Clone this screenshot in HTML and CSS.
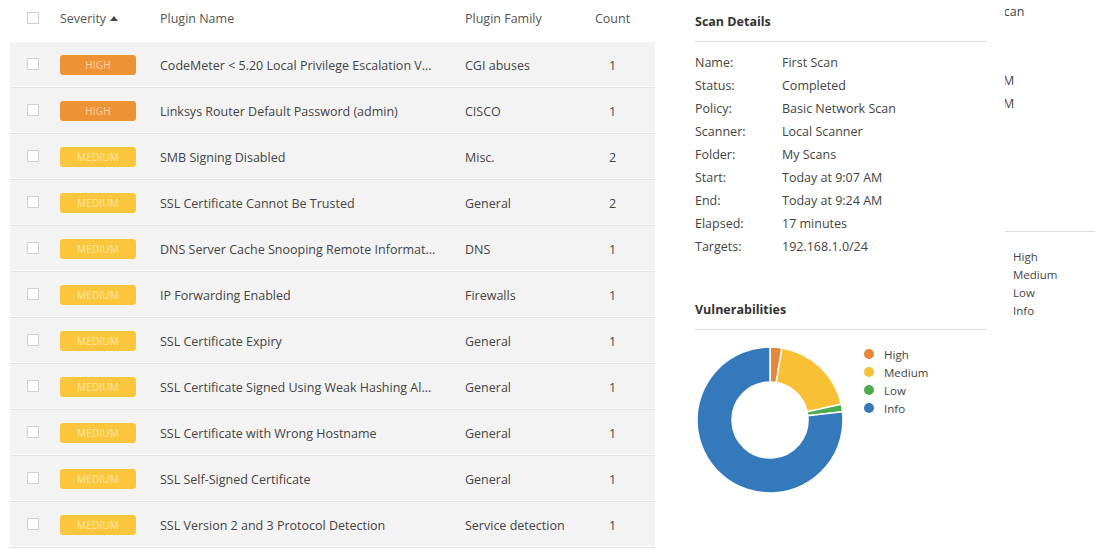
FILE: index.html
```html
<!DOCTYPE html>
<html>
<head>
<meta charset="utf-8">
<link rel="stylesheet" href="styles.css">
</head>
<body>
<div class="page">
  <div class="table">
    <div class="row head">
      <div class="c-check"><span class="box"></span></div>
      <div class="c-sev">Severity <span class="sort"></span></div>
      <div class="c-name">Plugin Name</div>
      <div class="c-fam">Plugin Family</div>
      <div class="c-count">Count</div>
    </div>
    <div class="row"><div class="c-check"><span class="box"></span></div><div class="c-sev"><span class="badge high">HIGH</span></div><div class="c-name">CodeMeter &lt; 5.20 Local Privilege Escalation V...</div><div class="c-fam">CGI abuses</div><div class="c-count">1</div></div>
    <div class="row"><div class="c-check"><span class="box"></span></div><div class="c-sev"><span class="badge high">HIGH</span></div><div class="c-name">Linksys Router Default Password (admin)</div><div class="c-fam">CISCO</div><div class="c-count">1</div></div>
    <div class="row"><div class="c-check"><span class="box"></span></div><div class="c-sev"><span class="badge med">MEDIUM</span></div><div class="c-name">SMB Signing Disabled</div><div class="c-fam">Misc.</div><div class="c-count">2</div></div>
    <div class="row"><div class="c-check"><span class="box"></span></div><div class="c-sev"><span class="badge med">MEDIUM</span></div><div class="c-name">SSL Certificate Cannot Be Trusted</div><div class="c-fam">General</div><div class="c-count">2</div></div>
    <div class="row"><div class="c-check"><span class="box"></span></div><div class="c-sev"><span class="badge med">MEDIUM</span></div><div class="c-name">DNS Server Cache Snooping Remote Informat...</div><div class="c-fam">DNS</div><div class="c-count">1</div></div>
    <div class="row"><div class="c-check"><span class="box"></span></div><div class="c-sev"><span class="badge med">MEDIUM</span></div><div class="c-name">IP Forwarding Enabled</div><div class="c-fam">Firewalls</div><div class="c-count">1</div></div>
    <div class="row"><div class="c-check"><span class="box"></span></div><div class="c-sev"><span class="badge med">MEDIUM</span></div><div class="c-name">SSL Certificate Expiry</div><div class="c-fam">General</div><div class="c-count">1</div></div>
    <div class="row"><div class="c-check"><span class="box"></span></div><div class="c-sev"><span class="badge med">MEDIUM</span></div><div class="c-name">SSL Certificate Signed Using Weak Hashing Al...</div><div class="c-fam">General</div><div class="c-count">1</div></div>
    <div class="row"><div class="c-check"><span class="box"></span></div><div class="c-sev"><span class="badge med">MEDIUM</span></div><div class="c-name">SSL Certificate with Wrong Hostname</div><div class="c-fam">General</div><div class="c-count">1</div></div>
    <div class="row"><div class="c-check"><span class="box"></span></div><div class="c-sev"><span class="badge med">MEDIUM</span></div><div class="c-name">SSL Self-Signed Certificate</div><div class="c-fam">General</div><div class="c-count">1</div></div>
    <div class="row"><div class="c-check"><span class="box"></span></div><div class="c-sev"><span class="badge med">MEDIUM</span></div><div class="c-name">SSL Version 2 and 3 Protocol Detection</div><div class="c-fam">Service detection</div><div class="c-count">1</div></div>
  </div>

  <div class="side">
    <h3 class="sec-title">Scan Details</h3>
    <div class="details">
      <div class="lbl">Name:</div><div class="val">First Scan</div>
      <div class="lbl">Status:</div><div class="val">Completed</div>
      <div class="lbl">Policy:</div><div class="val">Basic Network Scan</div>
      <div class="lbl">Scanner:</div><div class="val">Local Scanner</div>
      <div class="lbl">Folder:</div><div class="val">My Scans</div>
      <div class="lbl">Start:</div><div class="val">Today at 9:07 AM</div>
      <div class="lbl">End:</div><div class="val">Today at 9:24 AM</div>
      <div class="lbl">Elapsed:</div><div class="val">17 minutes</div>
      <div class="lbl">Targets:</div><div class="val">192.168.1.0/24</div>
    </div>
    <h3 class="sec-title vuln">Vulnerabilities</h3>
    <div class="chart">
      <svg class="donut" width="150" height="150" viewBox="0 0 150 150">
        <g stroke="#fff" stroke-width="1.5">
          <path fill="#e8873a" d="M75 2 A73 73 0 0 1 86.92 2.98 L81.21 37.51 A38 38 0 0 0 75 37 Z"/>
          <path fill="#f8c035" d="M86.92 2.98 A73 73 0 0 1 146.27 59.20 L112.10 66.78 A38 38 0 0 0 81.21 37.51 Z"/>
          <path fill="#4bab4f" d="M146.27 59.20 A73 73 0 0 1 147.53 66.74 L112.76 70.70 A38 38 0 0 0 112.10 66.78 Z"/>
          <path fill="#3579bd" d="M147.53 66.74 A73 73 0 1 1 75 2 L75 37 A38 38 0 1 0 112.76 70.70 Z"/>
        </g>
      </svg>
      <ul class="legend">
        <li><span class="dot d-high"></span>High</li>
        <li><span class="dot d-med"></span>Medium</li>
        <li><span class="dot d-low"></span>Low</li>
        <li><span class="dot d-info"></span>Info</li>
      </ul>
    </div>
  </div>

  <div class="frag">
    <div class="frag-line f-scan">Scan</div>
    <div class="frag-line f-am f-am1">AM</div>
    <div class="frag-line f-am">AM</div>
    <div class="frag-rule"></div>
    <ul class="frag-legend">
      <li>High</li>
      <li>Medium</li>
      <li>Low</li>
      <li>Info</li>
    </ul>
  </div>
</div>
</body>
</html>
```

FILE: styles.css
```css
* { box-sizing: border-box; }
html, body { margin: 0; padding: 0; background: #fff; }
body {
  font-family: "Open Sans", "Noto Sans", sans-serif;
  font-size: 12.5px;
  color: #444;
  width: 1095px;
  height: 549px;
  overflow: hidden;
}
.page {
  display: flex;
  align-items: flex-start;
}

/* table */
.table {
  margin-left: 10px;
  width: 645px;
  flex: none;
}
.row {
  display: grid;
  grid-template-columns: 50px 100px 305px 120px 55px;
  align-items: center;
  height: 46px;
  padding-top: 1px;
  background: #f3f3f3;
  border-bottom: 1px solid #e2e2e2;
  box-shadow: inset 0 -1px 0 #fafafa;
}
.row.head {
  height: 42px;
  background: #fff;
  border-bottom: none;
  box-shadow: none;
  align-items: start;
  padding-top: 10px;
  color: #555;
}
.c-check { padding-left: 17px; display: flex; }
.box {
  display: inline-block;
  width: 12px;
  height: 12px;
  border: 1px solid #cfcfcf;
  background: #fff;
}
.row .c-check { margin-top: -2px; }
.head .c-check { padding-top: 2px; margin-top: 0; }
.c-sev { display: flex; align-items: center; }
.sort {
  display: inline-block;
  width: 0; height: 0;
  border-left: 4px solid transparent;
  border-right: 4px solid transparent;
  border-bottom: 5px solid #444;
  margin-left: 4px;
  margin-top: -1px;
}
.c-name, .c-fam { white-space: nowrap; overflow: hidden; }
.c-count { text-align: center; }
.badge {
  display: inline-block;
  width: 76px;
  height: 20px;
  line-height: 20px;
  border-radius: 3px;
  text-align: center;
  font-size: 10px;
  letter-spacing: 0.2px;
}
.badge.high { background: #ee9236; color: #fbd3a6; }
.badge.med { background: #fbc63b; color: #fde7a2; }

/* side */
.side {
  margin-left: 40px;
  width: 292px;
  flex: none;
  padding-top: 12px;
}
.sec-title {
  margin: 0;
  font-size: 12.5px;
  font-weight: 700;
  color: #333;
  line-height: 20px;
  padding-bottom: 9px;
  border-bottom: 1px solid #dedede;
}
.details {
  display: grid;
  grid-template-columns: 87px 1fr;
  grid-auto-rows: 23px;
  align-items: center;
  margin-top: 9px;
}
.sec-title.vuln { margin-top: 42px; }
.chart {
  display: flex;
  align-items: flex-start;
  margin-top: 15px;
}
.donut { display: block; flex: none; }
.legend {
  list-style: none;
  margin: 0 0 0 19px;
  padding: 0;
  font-size: 11.5px;
}
.legend li {
  display: flex;
  align-items: center;
  height: 18px;
}
.dot {
  width: 10px; height: 10px;
  border-radius: 50%;
  margin-right: 10px;
}
.d-high { background: #e8873a; }
.d-med { background: #f8c035; }
.d-low { background: #4bab4f; }
.d-info { background: #3579bd; }

/* clipped fragment at far right */
.frag {
  margin-left: 18px;
  width: 90px;
  flex: none;
  overflow: hidden;
}
.frag-line {
  height: 23px;
  line-height: 23px;
  white-space: nowrap;
  margin-left: -8px;
}
.f-am { margin-left: -10px; }
.f-am1 { margin-top: 46px; }
.frag-rule {
  margin-top: 116px;
  border-top: 1px solid #dedede;
}
.frag-legend {
  list-style: none;
  margin: 16px 0 0 8px;
  padding: 0;
  font-size: 11.5px;
}
.frag-legend li { height: 18px; line-height: 18px; }
```
